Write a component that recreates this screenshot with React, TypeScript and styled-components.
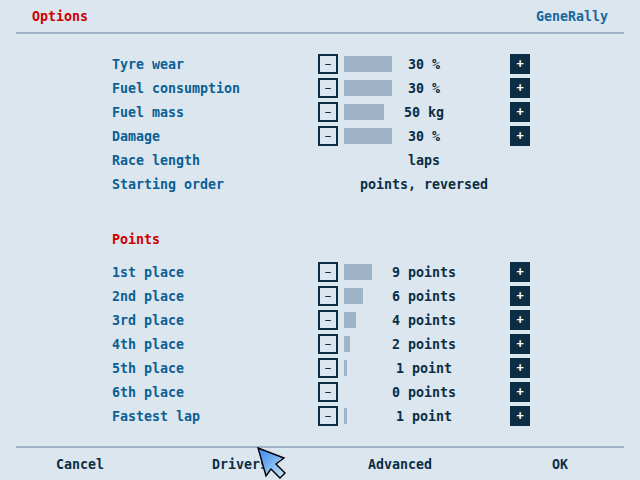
import styled, { createGlobalStyle } from 'styled-components';

const GlobalStyle = createGlobalStyle`
  html, body {
    margin: 0;
    padding: 0;
    background: #dce6ef;
  }
`;

type OptionRow = {
  label: string;
  value: string;
  bar?: number;
  buttons?: boolean;
};

const raceRows: OptionRow[] = [
  { label: 'Tyre wear', value: '30 %', bar: 48, buttons: true },
  { label: 'Fuel consumption', value: '30 %', bar: 48, buttons: true },
  { label: 'Fuel mass', value: '50 kg', bar: 40, buttons: true },
  { label: 'Damage', value: '30 %', bar: 48, buttons: true },
  { label: 'Race length', value: 'laps' },
  { label: 'Starting order', value: 'points, reversed' },
];

const pointRows: OptionRow[] = [
  { label: '1st place', value: '9 points', bar: 28, buttons: true },
  { label: '2nd place', value: '6 points', bar: 19, buttons: true },
  { label: '3rd place', value: '4 points', bar: 12, buttons: true },
  { label: '4th place', value: '2 points', bar: 6, buttons: true },
  { label: '5th place', value: '1 point', bar: 3, buttons: true },
  { label: '6th place', value: '0 points', bar: 0, buttons: true },
  { label: 'Fastest lap', value: '1 point', bar: 3, buttons: true },
];

const Cursor = () => (
  <CursorSvg width="34" height="36" viewBox="0 0 34 36">
    <defs>
      <linearGradient id="cur" x1="0" y1="0" x2="1" y2="1">
        <stop offset="0" stopColor="#3a88ec" />
        <stop offset="0.5" stopColor="#79b2f2" />
        <stop offset="1" stopColor="#d8e8fa" />
      </linearGradient>
    </defs>
    <path
      d="M2 2 L28 12 L20 18 L29 27 L24 32 L15 23 L10 30 Z"
      fill="url(#cur)"
      stroke="#000"
      strokeWidth="1.4"
      strokeLinejoin="miter"
    />
  </CursorSvg>
);

const Rows = ({ rows }: { rows: OptionRow[] }) => (
  <RowGrid>
    {rows.map((r) => (
      <Row key={r.label}>
        <Label>{r.label}</Label>
        {r.buttons ? <MinusButton>−</MinusButton> : <span />}
        <ValueCell>
          {r.bar !== undefined && r.bar > 0 ? <Bar style={{ width: r.bar }} /> : null}
          <Value>{r.value}</Value>
        </ValueCell>
        {r.buttons ? <PlusButton>+</PlusButton> : <span />}
      </Row>
    ))}
  </RowGrid>
);

const App = () => {
  return (
    <>
      <GlobalStyle />
      <Screen>
        <Header>
          <Title>Options</Title>
          <Brand>GeneRally</Brand>
        </Header>
        <Divider />
        <Content>
          <Rows rows={raceRows} />
          <SectionTitle>Points</SectionTitle>
          <Rows rows={pointRows} />
        </Content>
        <Divider />
        <Footer>
          <FooterButton>Cancel</FooterButton>
          <FooterButton>Drivers</FooterButton>
          <FooterButton>Advanced</FooterButton>
          <FooterButton>OK</FooterButton>
        </Footer>
        <Cursor />
      </Screen>
    </>
  );
};

const Screen = styled.div`
position: relative;
width: 640px;
height: 480px;
overflow: hidden;
background: #dce6ef;
display: flex;
flex-direction: column;
font-family: 'DejaVu Sans Mono', 'Liberation Mono', monospace;
font-weight: 700;
font-size: 13.3px;
`;

const Header = styled.div`
height: 32px;
padding: 0 32px;
display: flex;
align-items: center;
justify-content: space-between;
`;

const Title = styled.div`
color: #cc0000;
`;

const Brand = styled.div`
color: #1567a0;
`;

const Divider = styled.div`
height: 2px;
margin: 0 16px;
background: #a0b2c6;
`;

const Content = styled.div`
flex: 1;
padding: 20px 0 0 112px;
display: flex;
flex-direction: column;
`;

const RowGrid = styled.div`
display: flex;
flex-direction: column;
gap: 4px;
`;

const Row = styled.div`
display: grid;
grid-template-columns: 206px 20px 172px 20px;
height: 20px;
align-items: center;
`;

const Label = styled.div`
color: #0b5f94;
white-space: pre;
`;

const MinusButton = styled.div`
box-sizing: border-box;
width: 20px;
height: 20px;
border: 2px solid #0b2e45;
color: #0b2e45;
display: flex;
align-items: center;
justify-content: center;
font-weight: 400;
font-size: 11px;
`;

const PlusButton = styled.div`
width: 20px;
height: 20px;
background: #0b2e45;
color: #ffffff;
display: flex;
align-items: center;
justify-content: center;
font-size: 12px;
`;

const ValueCell = styled.div`
display: grid;
align-items: center;
height: 20px;
& > * {
  grid-area: 1 / 1;
}
`;

const Bar = styled.div`
justify-self: start;
margin-left: 6px;
height: 16px;
background: #a0b4c8;
`;

const Value = styled.div`
justify-self: center;
color: #0b2e45;
white-space: pre;
`;

const SectionTitle = styled.div`
margin: 36px 0 12px;
height: 20px;
line-height: 20px;
color: #cc0000;
`;

const Footer = styled.div`
height: 32px;
display: grid;
grid-template-columns: repeat(4, 1fr);
align-items: center;
`;

const FooterButton = styled.div`
text-align: center;
color: #0b2e45;
`;

const CursorSvg = styled.svg`
position: absolute;
left: 256px;
top: 446px;
`;

export default App;
